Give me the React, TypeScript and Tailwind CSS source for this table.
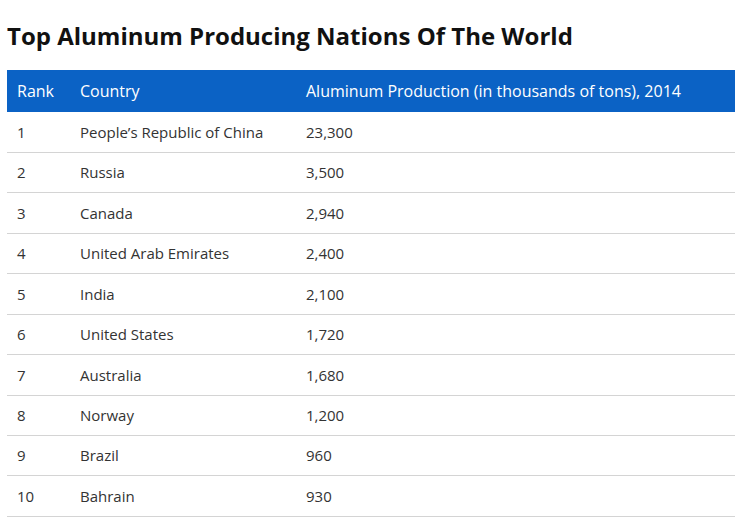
const rows: [string, string, string][] = [
  ["1", "People’s Republic of China", "23,300"],
  ["2", "Russia", "3,500"],
  ["3", "Canada", "2,940"],
  ["4", "United Arab Emirates", "2,400"],
  ["5", "India", "2,100"],
  ["6", "United States", "1,720"],
  ["7", "Australia", "1,680"],
  ["8", "Norway", "1,200"],
  ["9", "Brazil", "960"],
  ["10", "Bahrain", "930"],
];

export default function App() {
  return (
    <div
      className="bg-white min-h-[529px] px-[7px] pt-[20px]"
      style={{ fontFamily: "'Open Sans', sans-serif" }}
    >
      <h1 className="text-[24px] leading-[32px] font-bold text-[#111] mb-[18px]">
        Top Aluminum Producing Nations Of The World
      </h1>
      <table className="w-[728px] border-collapse text-[15px] text-[#333]">
        <thead>
          <tr className="bg-[#0b62c5] text-white h-[42px] text-[16px]">
            <th className="w-[63px] px-[10px] text-left font-normal">Rank</th>
            <th className="w-[226px] px-[10px] text-left font-normal">Country</th>
            <th className="px-[10px] text-left font-normal">
              Aluminum Production (in thousands of tons), 2014
            </th>
          </tr>
        </thead>
        <tbody>
          {rows.map(([rank, country, value]) => (
            <tr key={rank} className="h-[40.45px] border-b border-[#d4d4d4]">
              <td className="px-[10px]">{rank}</td>
              <td className="px-[10px]">{country}</td>
              <td className="px-[10px]">{value}</td>
            </tr>
          ))}
        </tbody>
      </table>
    </div>
  );
}
